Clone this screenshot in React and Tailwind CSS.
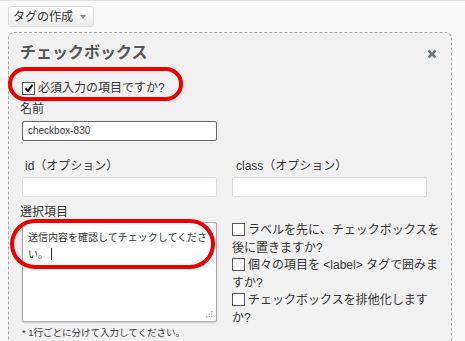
import React from "react";

const font = "font-['Liberation_Sans','Noto_Sans_CJK_JP',sans-serif]";

const Box = ({ checked }) => (
  <span className="inline-flex items-center justify-center w-[13px] h-[13px] border border-[#555] bg-white align-[-2px] mr-[3px] shrink-0">
    {checked && (
      <svg width="10" height="10" viewBox="0 0 10 10">
        <path d="M1.5 5.2 L4 7.8 L8.6 1.8" fill="none" stroke="#111" strokeWidth="2" />
      </svg>
    )}
  </span>
);

const App = () => {
  return (
    <div className={`w-[465px] h-[341px] overflow-hidden bg-[#f9f9f9] border-t border-[#e3e3e3] text-[#333] ${font}`}>
      {/* Top button */}
      <div className="pl-2 pt-[5px] h-[31px]">
        <button className="h-[21px] pl-[4px] pr-[7px] flex items-center gap-[7px] rounded-[3px] border border-[#dcdcdc] bg-gradient-to-b from-white to-[#ececec] text-[12px] text-[#333] leading-none">
          タグの作成
          <span className="w-0 h-0 border-l-[3.5px] border-r-[3.5px] border-t-[4px] border-l-transparent border-r-transparent border-t-[#888] mt-[1px]" />
        </button>
      </div>

      {/* Panel */}
      <div className="relative ml-2 w-[444px] h-[310px] border border-b-0 border-dashed border-[#a5a5a5] rounded-t-[6px] bg-[#f1f1f1] pl-[11px]">
        <div className="flex items-center justify-between pr-[14px] mt-[8px] h-[24px]">
          <h2 className="text-[16px] font-bold text-[#555] leading-[24px]">チェックボックス</h2>
          <svg width="10" height="10" viewBox="0 0 10 10" className="mt-[2px]">
            <path d="M1.5 1.5 L8.5 8.5 M8.5 1.5 L1.5 8.5" stroke="#6f7780" strokeWidth="2.6" />
          </svg>
        </div>

        <div className="mt-[13px] h-[20px] flex items-center pl-[2px] text-[12px] leading-[20px]">
          <Box checked />
          必須入力の項目ですか?
        </div>

        <div className="mt-[2px] text-[12px] leading-[18px]">名前</div>
        <div className="mt-[3px] ml-[2px] w-[195px] h-[20px] border border-[#666] rounded-[2px] bg-white px-[5px] text-[10px] leading-[18px] text-[#333]">
          checkbox-830
        </div>

        <div className="mt-[16px] ml-[2px] grid grid-cols-[195px_195px] gap-x-[15px]">
          <div>
            <div className="pl-[3px] text-[12px] leading-[18px]">id（オプション）</div>
            <div className="mt-[2px] h-[20px] border border-[#dedede] rounded-[2px] bg-white" />
          </div>
          <div>
            <div className="pl-[4px] text-[12px] leading-[18px]">class（オプション）</div>
            <div className="mt-[2px] h-[20px] border border-[#dedede] rounded-[2px] bg-white" />
          </div>
        </div>

        <div className="ml-[2px] grid grid-cols-[195px_210px] gap-x-[15px]">
          <div>
            <div className="mt-[6px] -ml-[2px] text-[12px] leading-[18px]">選択項目</div>
            <div className="relative mt-[1px] h-[100px] border border-[#aaa] rounded-[2px] bg-white shadow-[0_1px_2px_rgba(0,0,0,0.15)] px-[5px] pt-[6px] text-[10px] leading-[17px] text-[#333]">
              送信内容を確認してチェックしてくださ
              <br />
              い。<span className="inline-block w-px h-[12px] bg-[#222] align-[-2px] ml-[3px]" />
              <svg width="7" height="7" viewBox="0 0 7 7" className="absolute right-[3px] bottom-[3px]">
                <g fill="#bbb">
                  <rect x="5" y="0" width="1.5" height="1.5" />
                  <rect x="2.5" y="2.5" width="1.5" height="1.5" />
                  <rect x="5" y="2.5" width="1.5" height="1.5" />
                  <rect x="0" y="5" width="1.5" height="1.5" />
                  <rect x="2.5" y="5" width="1.5" height="1.5" />
                  <rect x="5" y="5" width="1.5" height="1.5" />
                </g>
              </svg>
            </div>
            <div className="mt-[4px] text-[9.5px] leading-[14px] text-[#333]">* 1行ごとに分けて入力してください。</div>
          </div>
          <div className="pt-[25px] text-[12px] leading-[17.5px]">
            <div><Box />ラベルを先に、チェックボックスを後に置きますか?</div>
            <div><Box />個々の項目を &lt;label&gt; タグで囲みますか?</div>
            <div><Box />チェックボックスを排他化しますか?</div>
          </div>
        </div>

        {/* Annotation ovals */}
        <div className="absolute left-[-1px] top-[34px] w-[175px] h-[34px] rounded-full border-[4px] border-[#ee0000] pointer-events-none" />
        <div className="absolute left-[1px] top-[186px] w-[205px] h-[50px] rounded-full border-[4px] border-[#ee0000] pointer-events-none" />
      </div>
    </div>
  );
};

export default App;
